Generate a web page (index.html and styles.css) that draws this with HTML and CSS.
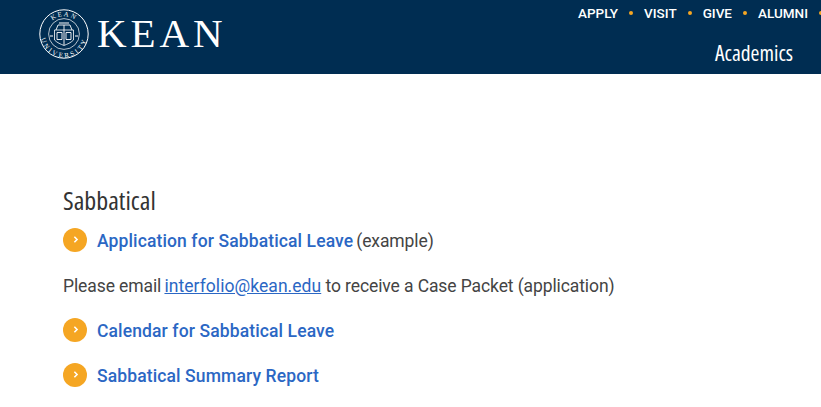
FILE: index.html
```html
<!DOCTYPE html>
<html lang="en">
<head>
<meta charset="utf-8">
<title>Sabbatical</title>
<link rel="stylesheet" href="styles.css">
</head>
<body>
<header class="site-header">
  <a class="brand" href="#">
    <svg class="seal" viewBox="0 0 50 50" width="50" height="50" aria-hidden="true">
      <circle cx="25" cy="25" r="24.2" fill="none" stroke="#fff" stroke-width="1"/>
      <circle cx="25" cy="25" r="15.4" fill="none" stroke="#fff" stroke-width="0.7"/>
      <defs>
        <path id="arc-top" d="M7.2 25a17.8 17.8 0 0 1 35.600 0"/>
        <path id="arc-bottom" d="M1.500 25a23.500 23.500 0 0 0 47 0"/>
      </defs>
      <text class="seal-text seal-top"><textPath href="#arc-top" startOffset="50%" text-anchor="middle">KEAN</textPath></text>
      <text class="seal-text seal-bottom"><textPath href="#arc-bottom" startOffset="50%" text-anchor="middle">UNIVERSITY</textPath></text>
      <path d="M15.500 21h19v10c-3 3-6 4-9.500 5.500-3.500-1.500-6.500-2.500-9.500-5.500z" fill="none" stroke="#fff" stroke-width="0.8"/>
      <path d="M17 21l2-5h12l2 5M25 16v20M18 23.500h5v7h-5zM27 23.500h5v7h-5z" fill="none" stroke="#fff" stroke-width="0.9"/>
      <path d="M11 27h3M36 27h3M20 14h10" stroke="#fff" stroke-width="1.100"/>
    </svg>
    <span class="wordmark">KEAN</span>
  </a>
  <div class="header-right">
    <nav class="top-nav">
      <a href="#">APPLY</a><span class="dot"></span>
      <a href="#">VISIT</a><span class="dot"></span>
      <a href="#">GIVE</a><span class="dot"></span>
      <a href="#">ALUMNI</a><span class="dot"></span>
    </nav>
    <a class="section-link" href="#">Academics</a>
  </div>
</header>
<main class="content">
  <h2 class="title">Sabbatical</h2>
  <p class="row"><span class="bullet"><svg viewBox="0 0 8 8" width="9" height="9"><path d="M3 1.600 5.400 4 3 6.400" fill="none" stroke="#fff" stroke-width="1.400"/></svg></span><a class="strong-link" href="#">Application for Sabbatical Leave</a><span class="after">(example)</span></p>
  <p class="row plain">Please email&nbsp;<a class="mail" href="#">interfolio@kean.edu</a>&nbsp;to receive a Case Packet (application)</p>
  <p class="row"><span class="bullet"><svg viewBox="0 0 8 8" width="9" height="9"><path d="M3 1.600 5.400 4 3 6.400" fill="none" stroke="#fff" stroke-width="1.400"/></svg></span><a class="strong-link" href="#">Calendar for Sabbatical Leave</a></p>
  <p class="row"><span class="bullet"><svg viewBox="0 0 8 8" width="9" height="9"><path d="M3 1.600 5.400 4 3 6.400" fill="none" stroke="#fff" stroke-width="1.400"/></svg></span><a class="strong-link" href="#">Sabbatical Summary Report</a></p>
</main>
</body>
</html>
```
FILE: styles.css
```css
* { box-sizing: border-box; }
html, body { height: 100%; }
body {
  margin: 0;
  overflow: hidden;
  background: #fff;
  color: #333;
  font-family: Roboto, "Liberation Sans", sans-serif;
}
a { text-decoration: none; }
.site-header {
  height: 74px;
  background: #002d52;
  display: flex;
  justify-content: space-between;
  padding: 9px 0 0 39px;
}
.brand { display: flex; align-items: flex-start; gap: 8px; color: #fff; }
.seal { display: block; }
.seal-text { fill: #fff; font-family: "Liberation Serif", serif; font-size: 6.800px; }
.seal-top { letter-spacing: 1.600px; }
.seal-bottom { letter-spacing: 2.300px; }
.wordmark {
  font-family: "Liberation Serif", serif;
  font-size: 41px;
  line-height: 48px;
  letter-spacing: 3.900px;
}
.header-right { display: flex; flex-direction: column; align-items: flex-end; margin-top: -5px; }
.top-nav { display: flex; align-items: center; height: 18px; }
.top-nav a { color: #fff; font-size: 13.500px; font-weight: 500; }
.dot { width: 4px; height: 4px; margin: 0 11px; border-radius: 50%; background: #f5a623; }
.top-nav .dot:last-child { margin-right: -2px; }
.section-link {
  color: #fff;
  font-family: "Open Sans", Roboto, sans-serif;
  font-stretch: 75%;
  font-size: 21.500px;
  line-height: 28px;
  margin: 17px 28px 0 0;
}
.content { padding: 111px 0 0 63px; }
.title {
  margin: 0 0 13px;
  font-family: "Open Sans", Roboto, sans-serif;
  font-stretch: 75%;
  font-weight: 400;
  font-size: 26px;
  line-height: 30px;
  color: #333;
}
.row {
  display: flex;
  align-items: center;
  height: 26px;
  margin: 0 0 19px;
  font-size: 17.500px;
  letter-spacing: -0.1px;
  color: #444;
}
.bullet {
  flex: none;
  width: 24px;
  height: 24px;
  margin: 0 10px 3px 0;
  border-radius: 50%;
  background: #f5a623;
  display: flex;
  align-items: center;
  justify-content: center;
}
.strong-link { color: #2b67c4; font-weight: 500; letter-spacing: 0.12px; }
.after { margin-left: 3px; }
.mail { color: #2b67c4; text-decoration: underline; letter-spacing: 0.05px; margin-left: -1px; }
```
